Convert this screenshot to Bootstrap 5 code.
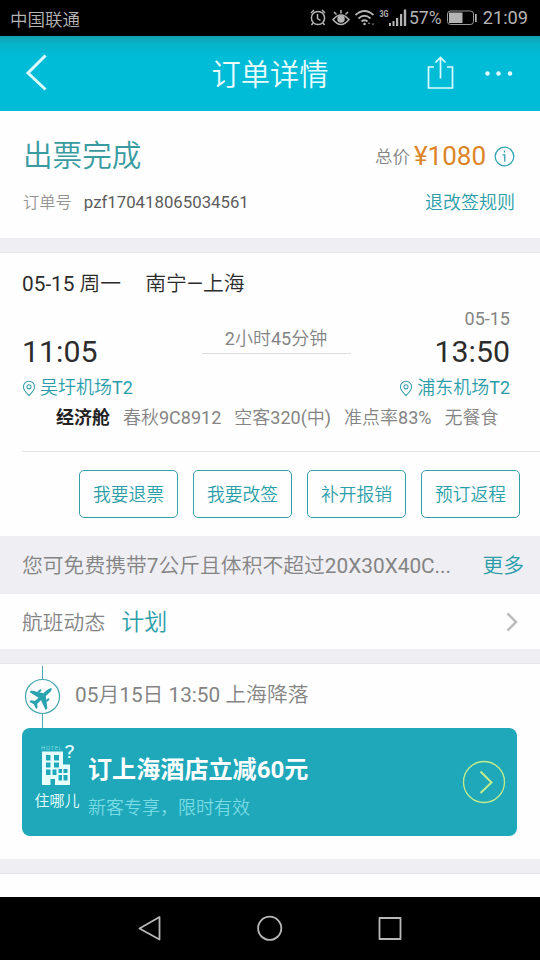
<!DOCTYPE html>
<html lang="zh-CN">
<head>
<meta charset="utf-8">
<meta name="viewport" content="width=device-width, initial-scale=1">
<title>订单详情</title>
<link href="https://cdn.jsdelivr.net/npm/bootstrap@5.3.0/dist/css/bootstrap.min.css" rel="stylesheet">
<style>
body{font-family:Roboto,"Noto Sans CJK SC",sans-serif;font-weight:350;width:540px;height:960px;overflow:hidden;background:#fefefe;color:#2b2b2b;white-space:nowrap}
svg{display:block;flex:none}
.latin{font-weight:400}
.teal{color:#2a9da8}
.grey{color:#848484}
.status{height:36px;background:#000;color:#b4b4b4;padding:0 12px 0 10px;font-size:17.5px}
.status-icons{gap:2px}
.clock-small{font-size:18.2px;margin-left:4px}
.topbar{height:75px;background:linear-gradient(#13a0b3 0,#06b2c8 8px,#00bcd7 20px);color:#e9fdff;padding:0 27px 0 25px}
.topbar h1{font-size:29.3px;line-height:75px;font-weight:350;margin:0;padding:4px 0 0 67px}
.band{height:15px;background:#eeeef3;border-bottom:1px solid #e6e6e9}
.order{height:127px;padding:24px 25px 0 23px}
.state{font-size:29.6px;line-height:42px;color:#389ba0}
.s16{font-size:16.3px}.s18{font-size:18px}.s20{font-size:20.8px}
.number{font-size:16.8px;color:#5c5c5c;font-weight:400}
.price{font-size:26px;color:#dd8526;font-weight:400;line-height:42px}
.total{font-size:17.5px;padding-top:2px}
.flight{height:283px;padding:16px 0 0 22px}
.route{font-size:20.8px;line-height:30px}
.times{height:92px;margin-right:30px;margin-top:4px}
.clock{font-size:30.3px;line-height:34px;font-weight:400;color:#2c2c2c}
.depart{padding-top:32px}
.place{line-height:26px;margin-top:6px}
.leg{width:149px;border-bottom:1px solid #dcdcdc;height:51px;padding-top:20px;line-height:32px;margin-left:20px}
.facts{font-size:18px;line-height:26px;padding-left:34px;margin-top:10px;gap:13px;color:#848484}
.facts b{color:#222;font-weight:700}
.actions{border-top:1px solid #e3e3e3;margin-top:20px;padding:18px 20px 0 0;gap:15px}
.actions .btn{width:99px;height:48px;border:1px solid #36a0a8;border-radius:5px;color:#2b9fa9;font-size:17.8px;font-weight:350;padding:2px 0 0;line-height:44px}
.bag{height:58px;background:#eeeef3;padding:4px 16px 0 22px}
.dyn{height:55px;padding:4px 21px 0 22px}
.stay{height:195px;padding:0 23px 0 22px}
.arrive{height:64px}
.promo{height:108px;background:#1ea8b9;border-radius:8px;color:#fff;padding:11px 11px 0 12px}
.hotelbox{width:46px;font-size:15px;line-height:24px;color:#e8ffff}
.offer{padding:14px 0 0 8px}
.promo h2{font-size:24.1px;line-height:34px;font-weight:700;margin:0}
.sub{font-size:18px;line-height:26px;color:#79dbe5;margin-top:8px}
.go{margin-top:21px}
.navkeys{height:63px;background:#000}
.blank{height:23px}
</style>
</head>
<body>
<div class="status d-flex align-items-center justify-content-between">
  <span class="pt-1">中国联通</span>
  <div class="status-icons d-flex align-items-center">
    <svg width="136" height="36" viewBox="309 0 136 36" fill="none" stroke="#b4b4b4" stroke-width="1.5">
      <circle cx="319" cy="18" r="6.6"/><path d="M318.5 14v4.5l3 2M312 13l3-3M326 13l-3-3M314 23l-1.500 2M324 23l1.500 2"/>
      <path d="M334 19.500q8-9 16 0q-8 10-16 0zM335 12l2.500 2.500M342 10v3.500M349 12l-2.500 2.500"/><circle cx="342" cy="19" r="3" fill="#b4b4b4"/>
      <path d="M356.500 15q9-8 18 0M359.500 18.500q6-5.500 12 0M362.500 21.500q3-2.500 6 0" stroke-width="1.700"/><circle cx="365.500" cy="24" r="1.300" fill="#b4b4b4" stroke="none"/><path d="M370 22l-1.500 2h3zM374 25.500l-1.300-2h2.600z" fill="#777" stroke="none"/>
      <g fill="#b4b4b4" stroke="none"><text x="380.500" y="17" font-size="9.500" font-weight="700" textLength="9" lengthAdjust="spacingAndGlyphs">3G</text>
      <path d="M390 23h2v3h-2zM393.500 21h2v5h-2zM397 18h2.200v8h-2.200zM401 14h2.200v12h-2.200zM404.800 9.500h2.400v16.500h-2.400z"/>
      <text x="410" y="24" font-size="18.500" font-weight="400" textLength="32.500" lengthAdjust="spacingAndGlyphs">57%</text></g>
    </svg>
    <svg width="31" height="36" viewBox="447 0 31 36"><rect x="448.500" y="11" width="26" height="13.500" rx="3" fill="none" stroke="#999"/><rect x="450" y="12.500" width="13.500" height="10.500" fill="#b4b4b4"/><path d="M476 14h1.700v8h-1.700z" fill="#b4b4b4"/></svg>
    <span class="clock-small latin">21:09</span>
  </div>
</div>
<header class="topbar d-flex align-items-center justify-content-between">
  <svg width="24" height="40" viewBox="0 1.500 24 40" fill="none" stroke="#dcfbff" stroke-width="3"><path d="M20.500 3L3 20.500 20.500 37"/></svg>
  <h1>订单详情</h1>
  <svg width="89" height="40" viewBox="0 1.500 89 40" fill="none" stroke="#dcfbff" stroke-width="1.700"><path d="M10 14.500H4.500v21h24v-21H23M16.500 26V5.500M11.500 10l5-5 5 5"/><g fill="#e6fdff" stroke="none"><circle cx="63.500" cy="21" r="2.200"/><circle cx="74.500" cy="21" r="2.200"/><circle cx="86" cy="21" r="2.200"/></g></svg>
</header>
<section class="order">
  <div class="d-flex justify-content-between">
    <div class="state">出票完成</div>
    <div class="d-flex align-items-center"><span class="total grey me-1">总价</span><span class="price">¥1080</span>
      <svg class="ms-2" width="21" height="21" viewBox="0 0 21 21" fill="none" stroke="#32a5b2" stroke-width="1.300"><circle cx="10.500" cy="10.500" r="9.300"/><path d="M8.500 8.800h2.300v7M10.500 4.500v2"/></svg></div>
  </div>
  <div class="d-flex justify-content-between align-items-center mt-2 pt-1">
    <div class="s16"><span style="color:#959595">订单号</span><span class="number ms-2 ps-1">pzf170418065034561</span></div>
    <div class="s18 teal">退改签规则</div>
  </div>
</section>
<div class="band"></div>
<section class="flight">
  <div class="route"><span class="latin">05-15</span> 周一<span class="ms-4">南宁<span class="latin">—</span>上海</span></div>
  <div class="times d-flex justify-content-between">
    <div class="depart"><div class="clock">11:05</div>
      <div class="place s18 teal d-flex align-items-center"><svg class="me-1" width="14" height="17" viewBox="0 0 15 17" fill="none" stroke="#359fa8" stroke-width="1.100"><path d="M7.500 16Q1.500 10.500 1.500 6.700a6 6 0 0 1 12 0Q13.500 10.500 7.500 16z"/><circle cx="7.500" cy="6.700" r="2.200"/></svg>吴圩机场<span class="latin">T2</span></div></div>
    <div class="leg text-center grey s18"><span class="latin">2</span>小时<span class="latin">45</span>分钟</div>
    <div class="text-end"><div class="s18 grey latin" style="line-height:32px">05-15</div><div class="clock">13:50</div>
      <div class="place s18 teal d-flex align-items-center"><svg class="me-1" width="14" height="17" viewBox="0 0 15 17" fill="none" stroke="#359fa8" stroke-width="1.100"><path d="M7.500 16Q1.500 10.500 1.500 6.700a6 6 0 0 1 12 0Q13.500 10.500 7.500 16z"/><circle cx="7.500" cy="6.700" r="2.200"/></svg>浦东机场<span class="latin">T2</span></div></div>
  </div>
  <div class="facts d-flex"><b>经济舱</b><span>春秋<span class="latin">9C8912</span></span><span>空客<span class="latin">320(</span>中<span class="latin">)</span></span><span>准点率<span class="latin">83%</span></span><span>无餐食</span></div>
  <div class="actions d-flex justify-content-end">
    <button class="btn">我要退票</button><button class="btn">我要改签</button><button class="btn">补开报销</button><button class="btn">预订返程</button>
  </div>
</section>
<div class="bag d-flex align-items-center justify-content-between s20"><span class="grey">您可免费携带<span class="latin">7</span>公斤且体积不超过<span class="latin">20X30X40C...</span></span><span class="teal">更多</span></div>
<section class="dyn d-flex align-items-center s20"><span class="grey">航班动态</span><span class="teal ms-3" style="font-size:23px">计划</span>
  <svg class="ms-auto mb-1" width="14" height="22" viewBox="0 0 14 22" fill="none" stroke="#bdbdbd" stroke-width="2.600"><path d="M2.500 2.500l8.500 8.500-8.500 8.500"/></svg></section>
<div class="band"></div>
<section class="stay">
  <div class="arrive d-flex s20 grey">
    <svg width="40" height="64" viewBox="22 664 40 64"><path d="M42.500 666v62" stroke="#4aa9b0"/><circle cx="42.500" cy="696.500" r="17" fill="#fefefe" stroke="#43a7b0" stroke-width="1.200"/><path transform="translate(42 697) rotate(48)" fill="#2aa3b0" d="M0-13Q1.800-12 1.800-8V-3.500L12 3.500V6L1.800 3V8L5 10.500V12.500L0 11-5 12.500V10.500L-1.800 8V3L-12 6V3.500L-1.800-3.500V-8Q-1.800-12 0-13zM5-4h2v4l-2-1.500zM-7-4h2v2.500L-7 0z"/></svg>
    <div style="line-height:62px;padding-left:13px"><span class="latin">05</span>月<span class="latin">15</span>日 <span class="latin">13:50</span> 上海降落</div>
  </div>
  <div class="promo d-flex">
    <div class="hotelbox text-center">
      <svg width="46" height="50" viewBox="34 739 46 50"><text x="41" y="749.500" font-size="6" textLength="21" fill="#a8e8ee">HOTEL</text><text x="64.500" y="757.500" font-size="18.500" font-weight="400" fill="#e8ffff" textLength="10" lengthAdjust="spacingAndGlyphs">?</text>
      <path fill="#e8ffff" fill-rule="evenodd" d="M42 751.500h21v13h7v20.500H55v-6h-4.500v6H42zM46 755v5.500h4.500v-5.500zM54 755v5.500h5v-5.500zM46 762.500v5h4.500v-5zM54 762.500v5h5v-5zM46 769.500v5.500h4.500v-5.500zM52.500 769.500v5.500h4v-5.500zM58.500 769v4h3.500v-4zM63.500 769v4h4v-4zM58.500 775v5.500h3.500v-5.500zM63.500 775v5.500h4v-5.500z"/></svg>
      住哪儿</div>
    <div class="offer"><h2>订上海酒店立减60元</h2><div class="sub">新客专享，限时有效</div></div>
    <svg class="go ms-auto" width="44" height="44" viewBox="0 0 44 44" fill="none" stroke="#c3ed8c"><circle cx="22" cy="22" r="20.500" stroke-width="1.300"/><path d="M18.500 11.500L29.500 22.500 18.500 33" stroke-width="2"/></svg>
  </div>
</section>
<div class="band"></div>
<div class="blank"></div>
<nav class="navkeys"><svg width="540" height="63" viewBox="0 897 540 63" fill="none" stroke="#b8b8b8" stroke-width="1.800" stroke-linejoin="round"><path d="M159.500 917v22.500L139.500 928.500z"/><circle cx="269.700" cy="928.300" r="11.600"/><path d="M379.500 918h21v21h-21z"/></svg></nav>
<script src="https://cdn.jsdelivr.net/npm/bootstrap@5.3.0/dist/js/bootstrap.bundle.min.js"></script>
</body>
</html>
